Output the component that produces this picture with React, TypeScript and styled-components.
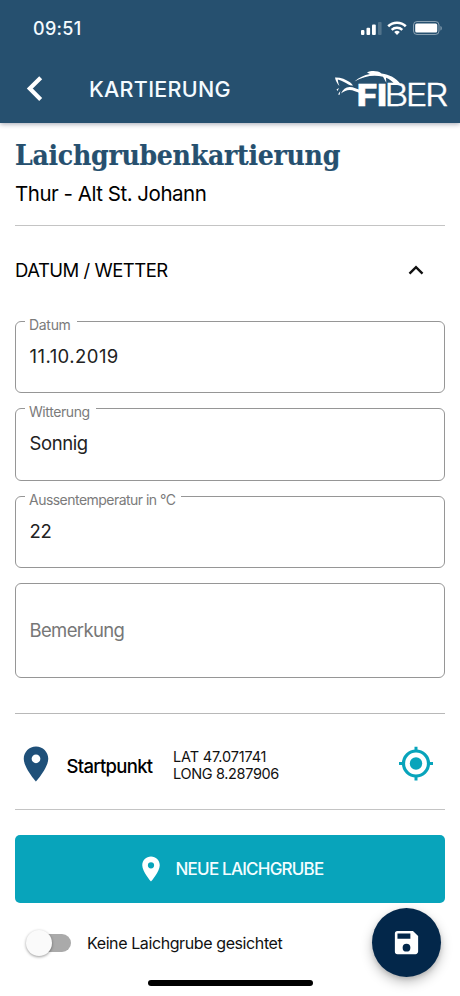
import React from 'react';
import styled, { createGlobalStyle } from 'styled-components';

const navy = '#26506f';
const teal = '#08a4bb';

const GlobalStyle = createGlobalStyle`
  * { box-sizing: border-box; }
  body { margin: 0; background: #fff; font-family: Inter, "Liberation Sans", sans-serif; color: #111; }
`;

const Screen = styled.div`
  position: relative;
  display: flex;
  flex-direction: column;
  width: 460px;
  height: 996px;
  overflow: hidden;
  background: #fff;
`;

const Header = styled.header`
  flex: none;
  height: 123px;
  background: ${navy};
  color: #f4fbff;
  box-shadow: 0 1px 5px rgba(20, 30, 60, 0.4);
`;

const StatusBar = styled.div`
  display: flex;
  justify-content: space-between;
  height: 56px;
  padding: 0 17px 0 33px;
`;

const Time = styled.span`
  font-size: 18px;
  font-weight: 500;
  letter-spacing: 0.3px;
  line-height: 57px;
`;

const StatusIcons = styled.svg`
  margin-top: 18px;
`;

const AppBar = styled.div`
  display: flex;
  align-items: center;
  height: 66px;
  padding: 0 12px 0 22px;
`;

const BackIcon = styled.svg`
  flex: none;
`;

const AppTitle = styled.h1`
  flex: 1;
  margin: 0 0 0 39px;
  font-size: 21.5px;
  font-weight: 500;
  letter-spacing: 0.3px;
  line-height: 66px;
`;

const Logo = styled.svg`
  flex: none;
  overflow: visible;
  font-family: Inter, sans-serif;
`;

const Content = styled.main`
  display: flex;
  flex-direction: column;
  padding: 0 15px;
`;

const Title = styled.h2`
  margin: 15px 0 0;
  font: bold 28px/36px "DejaVu Serif Condensed", "DejaVu Serif", serif;
  letter-spacing: -0.25px;
  color: ${navy};
  -webkit-text-stroke: 0.2px ${navy};
  white-space: nowrap;
`;

const Subtitle = styled.p`
  margin: 5px 0 16px;
  font-size: 20.5px;
  font-weight: 430;
  line-height: 30px;
  letter-spacing: -0.48px;
  color: #000;
`;

const SectionHeader = styled.div`
  display: flex;
  justify-content: space-between;
  align-items: center;
  height: 90px;
  margin-bottom: 6px;
  padding-right: 21px;
  border-top: 1px solid #c4c4c4;
  font-size: 18.5px;
  font-weight: 430;
  line-height: 24px;
  letter-spacing: -0.5px;
  color: #000;
`;

const SectionTitle = styled.span`
  padding-bottom: 2px;
`;

const Field = styled.div<{ $height: number }>`
  position: relative;
  display: flex;
  align-items: center;
  height: ${(p) => p.$height}px;
  margin-bottom: 15px;
  padding-left: 13.5px;
  border: 1px solid #969696;
  border-radius: 6px;
`;

const FieldLabel = styled.label<{ $tracking: number }>`
  position: absolute;
  top: -8px;
  left: 9px;
  padding: 0 6px 0 4px;
  background: #fff;
  font-size: 14px;
  line-height: 22px;
  letter-spacing: ${(p) => p.$tracking}px;
  color: #7b7b7b;
`;

const FieldValue = styled.span<{ $tracking: number; $placeholder?: boolean }>`
  padding-bottom: ${(p) => (p.$placeholder ? 0 : 2)}px;
  font-size: 18.5px;
  line-height: 24px;
  letter-spacing: ${(p) => p.$tracking}px;
  color: ${(p) => (p.$placeholder ? '#777' : '#222')};
`;

const StartRow = styled.section`
  display: flex;
  align-items: center;
  height: 97px;
  margin-top: 20px;
  padding: 6px 11px 0 0;
  border-top: 1px solid #b8b8b8;
  border-bottom: 1px solid #c4c4c4;
`;

const PinIcon = styled.svg`
  flex: none;
`;

const StartLabel = styled.span`
  width: 97px;
  margin: 3px 0 0 9.5px;
  font-size: 18.5px;
  font-weight: 500;
  letter-spacing: -0.7px;
  color: #000;
`;

const Coordinates = styled.div`
  display: grid;
  flex: 1;
  margin: 2px 0 0 9.5px;
  font-size: 14.5px;
  line-height: 17.5px;
`;

const Coordinate = styled.span<{ $tracking: number }>`
  letter-spacing: ${(p) => p.$tracking}px;
`;

const PrimaryButton = styled.button`
  display: flex;
  align-items: center;
  justify-content: center;
  height: 68.5px;
  margin-top: 25px;
  padding: 0 1px 0 0;
  gap: 10px;
  border: 0;
  border-radius: 5px;
  background: ${teal};
  color: #f4fdff;
  font: 500 17px Inter, sans-serif;
  letter-spacing: -0.78px;
`;

const SwitchRow = styled.label`
  display: flex;
  align-items: center;
  height: 40px;
  margin-top: 20px;
  padding-left: 15px;
  font-size: 16px;
  letter-spacing: -0.4px;
  color: #111;
`;

const Track = styled.span`
  display: flex;
  align-items: center;
  width: 41px;
  height: 18px;
  margin-right: 16px;
  border-radius: 9px;
  background: #aaa;
`;

const Thumb = styled.span`
  width: 26px;
  height: 26px;
  margin-left: -4px;
  border-radius: 50%;
  background: #fafafa;
  box-shadow: 0 1px 3px rgba(0, 0, 0, 0.4);
`;

const SaveButton = styled.button`
  position: absolute;
  right: 19px;
  bottom: 19.5px;
  display: grid;
  place-items: center;
  width: 69px;
  height: 69px;
  padding: 0;
  border: 0;
  border-radius: 50%;
  background: #03274a;
  box-shadow: 0 5px 12px rgba(0, 0, 0, 0.25), 0 2px 4px rgba(0, 0, 0, 0.12);
`;

const HomeIndicator = styled.div`
  position: absolute;
  left: 148px;
  bottom: 10px;
  width: 165px;
  height: 6px;
  border-radius: 3px;
  background: #000;
`;

const Pin = ({ size, color }: { size: number; color: string }) => (
  <PinIcon width={size} height={size} viewBox="0 0 24 24" fill={color}>
    <path d="M12 2C8.13 2 5 5.13 5 9c0 5.25 7 13 7 13s7-7.75 7-13c0-3.87-3.13-7-7-7zm0 9.5a2.5 2.5 0 0 1 0-5 2.5 2.5 0 0 1 0 5z" />
  </PinIcon>
);

const fields = [
  { label: 'Datum', labelTracking: -0.3, value: '11.10.2019', tracking: 0.45 },
  { label: 'Witterung', labelTracking: -0.42, value: 'Sonnig', tracking: -0.4 },
  { label: 'Aussentemperatur in °C', labelTracking: -0.53, value: '22', tracking: -0.2 },
];

export default function App() {
  return (
    <Screen>
      <GlobalStyle />
      <Header>
        <StatusBar>
          <Time>09:51</Time>
          <StatusIcons width="83" height="20" viewBox="0 0 83 20" fill="#fff">
            <rect x="1" y="12" width="3.4" height="5" rx="1" />
            <rect x="6.5" y="9.8" width="3.6" height="7.2" rx="1" />
            <rect x="12" y="6.5" width="3.8" height="10.5" rx="1" />
            <rect x="18" y="4" width="3.6" height="13" rx="1" opacity="0.2" />
            <path d="M28.2 8.2a12.8 12.8 0 0 1 17.6 0" fill="none" stroke="#fff" strokeWidth="2.6" />
            <path d="M31.7 11.8a7.8 7.8 0 0 1 10.6 0" fill="none" stroke="#fff" strokeWidth="2.5" />
            <path d="M34.2 14.1a4.1 4.1 0 0 1 5.6 0L37 17z" />
            <rect x="53.5" y="3.5" width="25.5" height="13" rx="3.5" fill="none" stroke="#fff" strokeOpacity="0.45" />
            <rect x="55.2" y="5.5" width="22" height="9" rx="1.5" />
            <path d="M80.5 8v4.5c1.6-.6 1.6-3.9 0-4.5z" opacity="0.5" />
          </StatusIcons>
        </StatusBar>
        <AppBar>
          <BackIcon width="28" height="28" viewBox="0 0 28 28" fill="none" stroke="#fff" strokeWidth="4.2">
            <path d="M18.7 2.8 7.8 13.6l10.9 10.8" />
          </BackIcon>
          <AppTitle>KARTIERUNG</AppTitle>
          <Logo width="114" height="50" viewBox="334 64 114 50" fill="#fff">
            <text transform="translate(356.8 106) scale(1.18 1)" fontSize="30" fontWeight="800" letterSpacing="-0.5" stroke="#fff" strokeWidth="0.4">FI</text>
            <text transform="translate(384.3 106) scale(1.22 1)" fontSize="30.5" fontWeight="300" letterSpacing="-2.4" stroke="#fff" strokeWidth="0.3">BER</text>
            <path d="M335 77.5c5-.3 11 1.8 15 4.8 1.200 1 2.100 2 3 3.200-1.500.3-3.200-.2-4.600-1-3.300-1.900-6.300-3.600-10.600-5 .1 2.400.9 4.600 1.600 6.500-2.200-2.300-3.800-5.200-4.400-8.500z" />
            <path d="M336.5 89.5l2.500-1.500-1.500 3zM338 94.500l2.300-3.500-.6 3.800z" />
            <path d="M341 93.5c2-4 4.500-6.300 8.500-6.500 3.500-.2 7.500 2 11.500 3v3.500c-4.500-1.500-8-3.500-11.500-3.500-3 0-5.500 1.200-8.500 3.500z" />
            <path d="M354.5 81.500c4.500-4 9.500-6.300 15.500-7.500l-3-1.500c4.500-2.200 11-1.700 14.500.9 8 1 14.500 4.700 18.500 9.900l-5.500.8c-2.300-3-5.500-5.200-8.500-6.300l.3 5-3.300-6C374 74.500 364 76 354.500 81.500z" />
          </Logo>
        </AppBar>
      </Header>

      <Content>
        <Title>Laichgrubenkartierung</Title>
        <Subtitle>Thur - Alt St. Johann</Subtitle>
        <SectionHeader>
          <SectionTitle>DATUM / WETTER</SectionTitle>
          <svg width="16" height="11" viewBox="0 0 16 11" fill="none" stroke="#111" strokeWidth="2.4">
            <path d="M1.5 8.700 8 2.200l6.500 6.500" />
          </svg>
        </SectionHeader>
        {fields.map((f) => (
          <Field key={f.label} $height={72.3}>
            <FieldLabel $tracking={f.labelTracking}>{f.label}</FieldLabel>
            <FieldValue $tracking={f.tracking}>{f.value}</FieldValue>
          </Field>
        ))}
        <Field $height={95}>
          <FieldValue $tracking={-0.65} $placeholder>Bemerkung</FieldValue>
        </Field>
        <StartRow>
          <Pin size={42} color="#1f5079" />
          <StartLabel>Startpunkt</StartLabel>
          <Coordinates>
            <Coordinate $tracking={-0.15}>LAT 47.071741</Coordinate>
            <Coordinate $tracking={-0.35}>LONG 8.287906</Coordinate>
          </Coordinates>
          <svg width="36" height="36" viewBox="0 0 36 36" fill="none" stroke={teal}>
            <circle cx="18" cy="17.5" r="12.5" strokeWidth="3.2" />
            <circle cx="18" cy="17.5" r="6.2" fill={teal} stroke="none" />
            <path d="M18 .7v5M18 29.5v5M1 17.5h5M30 17.5h5" strokeWidth="3" />
          </svg>
        </StartRow>
        <PrimaryButton>
          <Pin size={30} color="#fff" />
          NEUE LAICHGRUBE
        </PrimaryButton>
        <SwitchRow>
          <Track><Thumb /></Track>
          Keine Laichgrube gesichtet
        </SwitchRow>
      </Content>

      <SaveButton aria-label="Speichern">
        <svg width="31" height="31" viewBox="0 0 24 24" fill="#fff">
          <path d="M17 3H5a2 2 0 0 0-2 2v14a2 2 0 0 0 2 2h14c1.1 0 2-.9 2-2V7l-4-4zm-5 16a3 3 0 1 1 0-6 3 3 0 0 1 0 6zm3-10H5V5h10v4z" />
        </svg>
      </SaveButton>
      <HomeIndicator />
    </Screen>
  );
}
